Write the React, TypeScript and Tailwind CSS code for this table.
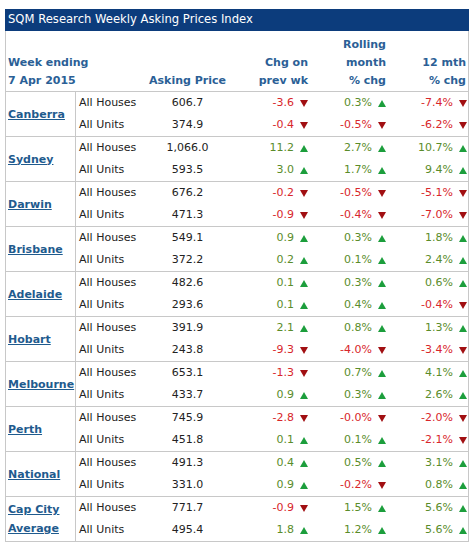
import React from 'react';

type Row = [string, string, string, string, string];
type City = { name: string[]; rows: [Row, Row] };

const cities: City[] = [
  { name: ['Canberra'], rows: [['All Houses', '606.7', '-3.6', '0.3%', '-7.4%'], ['All Units', '374.9', '-0.4', '-0.5%', '-6.2%']] },
  { name: ['Sydney'], rows: [['All Houses', '1,066.0', '11.2', '2.7%', '10.7%'], ['All Units', '593.5', '3.0', '1.7%', '9.4%']] },
  { name: ['Darwin'], rows: [['All Houses', '676.2', '-0.2', '-0.5%', '-5.1%'], ['All Units', '471.3', '-0.9', '-0.4%', '-7.0%']] },
  { name: ['Brisbane'], rows: [['All Houses', '549.1', '0.9', '0.3%', '1.8%'], ['All Units', '372.2', '0.2', '0.1%', '2.4%']] },
  { name: ['Adelaide'], rows: [['All Houses', '482.6', '0.1', '0.3%', '0.6%'], ['All Units', '293.6', '0.1', '0.4%', '-0.4%']] },
  { name: ['Hobart'], rows: [['All Houses', '391.9', '2.1', '0.8%', '1.3%'], ['All Units', '243.8', '-9.3', '-4.0%', '-3.4%']] },
  { name: ['Melbourne'], rows: [['All Houses', '653.1', '-1.3', '0.7%', '4.1%'], ['All Units', '433.7', '0.9', '0.3%', '2.6%']] },
  { name: ['Perth'], rows: [['All Houses', '745.9', '-2.8', '-0.0%', '-2.0%'], ['All Units', '451.8', '0.1', '0.1%', '-2.1%']] },
  { name: ['National'], rows: [['All Houses', '491.3', '0.4', '0.5%', '3.1%'], ['All Units', '331.0', '0.9', '-0.2%', '0.8%']] },
  { name: ['Cap City', 'Average'], rows: [['All Houses', '771.7', '-0.9', '1.5%', '5.6%'], ['All Units', '495.4', '1.8', '1.2%', '5.6%']] },
];

// valor con flecha arriba/abajo según el signo
function Change({ value }: { value: string }) {
  const down = value.startsWith('-');
  return (
    <span className={`flex items-center justify-end ${down ? 'text-[#d8262b]' : 'text-[#5a8c2a]'}`}>
      {value}
      <svg width="8" height="7" viewBox="0 0 8 7" className="ml-[6px]">
        {down ? <polygon points="0,0 8,0 4,7" fill="#a10f12" /> : <polygon points="4,0 8,7 0,7" fill="#1c9e3c" />}
      </svg>
    </span>
  );
}

export default function App() {
  return (
    <div className="bg-white w-[473px] h-[546px] pt-[9px] pl-[5px]" style={{ fontFamily: '"DejaVu Sans", Verdana, sans-serif' }}>
      <div className="w-[464px] text-[11px]">
        <div className="h-[22px] bg-[#0c3c7c] text-white text-[11.6px] flex items-center pl-[3px]">
          SQM Research Weekly Asking Prices Index
        </div>

        <div className="border-x border-b border-[#c8c8c8]">
          {/* cabecera */}
          <div className="h-[61px] flex items-end pb-[1px] font-bold text-[#2b5f96] leading-[18px] border-b border-[#c8c8c8]">
            <div className="w-[139px] pl-[2px]">
              Week ending
              <br />
              7 Apr 2015
            </div>
            <div className="w-[85px] text-center">Asking Price</div>
            <div className="w-[80px] text-right pr-[2px]">
              Chg on
              <br />
              prev wk
            </div>
            <div className="w-[79px] text-right pr-[3px]">
              Rolling
              <br />
              month
              <br />% chg
            </div>
            <div className="w-[79px] text-right pr-[2px]">
              12 mth
              <br />% chg
            </div>
          </div>

          {cities.map((c, i) => (
            <div key={c.name.join()} className={`flex ${i < cities.length - 1 ? 'border-b border-[#c8c8c8]' : ''}`}>
              <div className="w-[70px] border-r border-[#c8c8c8] flex flex-col justify-center pl-[2px] font-bold text-[#1f5b8e] underline leading-[19px]">
                {c.name.map((n) => (
                  <span key={n}>{n}</span>
                ))}
              </div>
              <div className="flex flex-col">
                {c.rows.map((r) => (
                  <div key={r[0]} className="h-[22px] flex items-center text-[#222]">
                    <div className="w-[69px] pl-[3px]">{r[0]}</div>
                    <div className="w-[85px] text-center">{r[1]}</div>
                    <div className="w-[80px] pr-[2px]">
                      <Change value={r[2]} />
                    </div>
                    <div className="w-[79px] pr-[3px]">
                      <Change value={r[3]} />
                    </div>
                    <div className="w-[79px] pr-[1px]">
                      <Change value={r[4]} />
                    </div>
                  </div>
                ))}
              </div>
            </div>
          ))}
        </div>
      </div>
    </div>
  );
}
